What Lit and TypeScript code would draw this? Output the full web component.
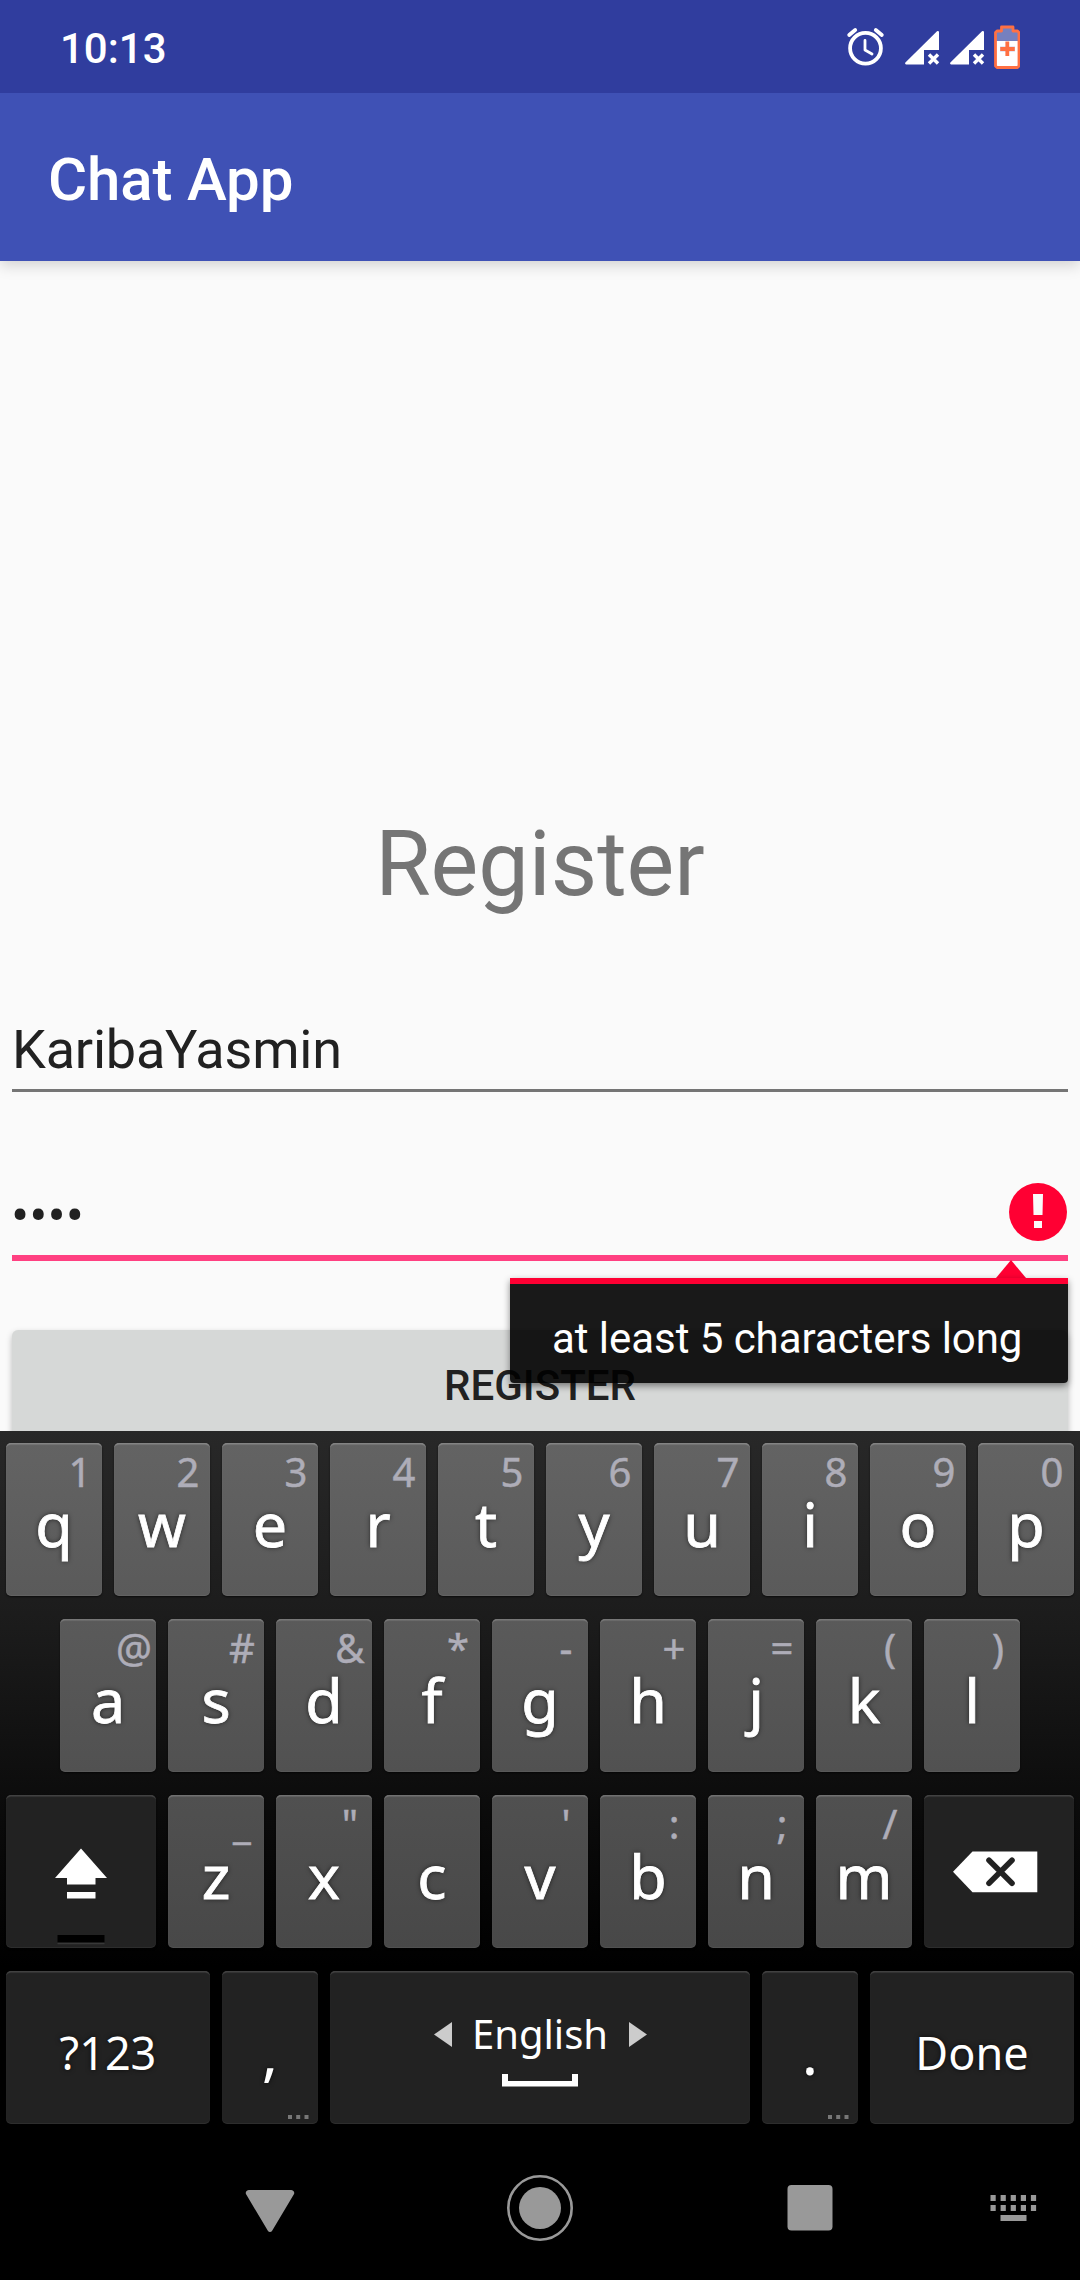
import { LitElement, html, css, svg, nothing } from "lit";
import { customElement, property } from "lit/decorators.js";

interface KeySpec {
  label: string;
  hint?: string;
}

const letters = (chars: string, hints: string): KeySpec[] =>
  [...chars].map((label, i) => ({ label, hint: hints[i] === " " ? undefined : hints[i] }));

const ROW_TOP = letters("qwertyuiop", "1234567890");
const ROW_HOME = letters("asdfghjkl", "@#&*-+=()");
const ROW_BOTTOM = letters("zxcvbnm", "_\" ':;/");

@customElement("status-bar")
class StatusBar extends LitElement {
  static styles = css`
    :host {
      display: flex;
      box-sizing: border-box;
      height: 93px;
      padding: 4px 60px 0 60px;
      align-items: center;
      justify-content: space-between;
      background: #303d9e;
      color: #fff;
    }
    .time {
      font: 500 42px/50px Roboto, sans-serif;
    }
    .icons {
      display: block;
      width: 174px;
      height: 50px;
    }
  `;

  render() {
    const signal = (x: number) => svg`
      <path d="M${x + 32} 7.2 a1.2 1.2 0 0 1 2 .8 V26 H${x + 19} V40.5 H${x + 1.2} a1.2 1.2 0 0 1 -.8 -2 Z" fill="#fff" />
      <path d="M${x + 24} 30.5 l9 9 m0 -9 l-9 9" stroke="#fff" stroke-width="3.4" />`;
    return html`
      <span class="time">10:13</span>
      <svg class="icons" viewBox="0 0 174 50" fill="none">
        <g stroke="#fff" stroke-width="3.8" stroke-linecap="round" stroke-linejoin="round">
          <circle cx="19.5" cy="24.3" r="15.4" />
          <path d="M19 16.5 V26 L26 30" stroke-width="2.8" />
          <path d="M3.2 11 L9.2 6" />
          <path d="M29.8 6 L35.8 11" />
        </g>
        ${signal(59)} ${signal(104)}
        <path d="M150 7.5 h6 v-4 h10.5 v4 h6 v9.5 h-22.5 z" fill="#7580bf" />
        <path d="M150 17 h22.5 v26 h-22.5 z" fill="#fff" />
        <path d="M151 7 h4.5 v-4 h11.5 v4 h4.5 l1.5 1.5 v33.5 l-1.5 1.5 h-20.5 l-1.5 -1.5 v-33.5 z"
          stroke="#ff7043" stroke-width="2.8" stroke-linejoin="round" />
        <path d="M154 25 h15" stroke="#c9cdea" stroke-width="5" />
        <path d="M161.3 17.5 v14.5 M154.3 25 h14.4" stroke="#ff7043" stroke-width="3.8" />
      </svg>
    `;
  }
}

@customElement("register-form")
class RegisterForm extends LitElement {
  static styles = css`
    :host {
      display: block;
      box-sizing: border-box;
      height: 1170px;
      padding: 551px 12px 0;
      overflow: hidden;
      background: #fafafa;
      color: #212121;
      font-family: Roboto, sans-serif;
    }
    .title {
      margin: 0;
      font-size: 90px;
      font-weight: 400;
      line-height: 106px;
      text-align: center;
      color: #757575;
    }
    .field {
      display: flex;
      justify-content: space-between;
      align-items: flex-start;
      font-size: 54px;
      line-height: 64px;
    }
    .name {
      margin-top: 100px;
      padding-bottom: 7px;
      border-bottom: 3px solid #757575;
      letter-spacing: -0.22px;
    }
    .password {
      position: relative;
      margin-top: 91px;
      height: 72px;
      border-bottom: 6px solid #ff4081;
    }
    .dots {
      margin: 1px 0 0 -1px;
    }
    .alert {
      display: block;
      width: 58px;
      height: 58px;
      margin-right: 1.5px;
    }
    .popup {
      position: absolute;
      top: 77px;
      right: 0;
      width: 558px;
      display: flex;
      flex-direction: column;
      z-index: 2;
    }
    .arrow {
      display: block;
      width: 30px;
      height: 18px;
      margin-left: 486px;
    }
    .bubble {
      box-sizing: border-box;
      height: 104.5px;
      padding: 30px 0 0 42px;
      border-top: 6px solid #ff0033;
      border-radius: 0 0 4px 4px;
      background: rgba(0, 0, 0, 0.9);
      background-clip: padding-box;
      box-shadow: 0 3px 7px rgba(0, 0, 0, 0.45);
      color: #fff;
      font-size: 42px;
      line-height: 50px;
      letter-spacing: -0.05px;
      white-space: nowrap;
    }
    .submit {
      display: block;
      box-sizing: border-box;
      width: 100%;
      height: 132px;
      margin: 69px 0 0;
      padding: 31px 0 0;
      border: 0;
      border-radius: 6px;
      background: #d6d8d7;
      box-shadow: 0 3px 6px rgba(0, 0, 0, 0.25);
      color: #212121;
      font: 500 42px/50px Roboto, sans-serif;
      text-align: center;
    }
  `;

  render() {
    return html`
      <h1 class="title">Register</h1>
      <div class="field name">KaribaYasmin</div>
      <div class="field password">
        <span class="dots">••••</span>
        <svg class="alert" viewBox="0 0 58 58">
          <circle cx="29" cy="29" r="29" fill="#ff0033" />
          <path d="M24 11 h10 l-.5 21 h-9 z M25 38 h8 v7 h-8 z" fill="#fafafa" />
        </svg>
        <div class="popup">
          <svg class="arrow" viewBox="0 0 30 18"><path d="M15 0 L30 18 H0 Z" fill="#ff0033" /></svg>
          <div class="bubble">at least 5 characters long</div>
        </div>
      </div>
      <div class="submit">REGISTER</div>
    `;
  }
}

@customElement("key-cap")
class KeyCap extends LitElement {
  @property() label = "";
  @property() hint = "";
  @property({ type: Boolean }) more = false;

  static styles = css`
    :host {
      display: flex;
      position: relative;
      box-sizing: border-box;
      width: 96px;
      height: 153px;
      flex: none;
      justify-content: center;
      align-items: flex-start;
      padding-top: 41px;
      border-radius: 5px;
      background: var(--face, #222);
      box-shadow: inset 0 2px 1px -0.5px var(--shine, #444), inset 0 -1px 1px rgba(255, 255, 255, 0.06),
        0 1px 2px rgba(0, 0, 0, 0.6);
      color: #fff;
      font: 61px/80px "Noto Sans", "Open Sans", sans-serif;
    }
    .label {
      text-shadow: 0 0 5px rgba(0, 0, 0, 0.7);
      -webkit-text-stroke: var(--weight, 0) #fff;
    }
    .hint {
      position: absolute;
      top: 7px;
      right: 0;
      width: 44px;
      display: flex;
      justify-content: center;
      color: #aeadb8;
      -webkit-text-stroke: 0.5px #aeadb8;
      font-size: 40px;
      line-height: 44px;
    }
    .more {
      position: absolute;
      right: 9px;
      bottom: 5px;
      width: 21px;
      height: 4px;
    }
  `;

  render() {
    return html`
      <slot><span class="label">${this.label}</span></slot>
      ${this.hint ? html`<span class="hint">${this.hint}</span>` : nothing}
      ${this.more
        ? html`<svg class="more" viewBox="0 0 21 4"><path d="M0 0h4v4H0zM8.2 0h4v4h-4zM16.5 0h4v4h-4z" fill="#777" /></svg>`
        : nothing}
    `;
  }
}

@customElement("soft-keyboard")
class SoftKeyboard extends LitElement {
  static styles = css`
    :host {
      display: flex;
      flex-direction: column;
      box-sizing: border-box;
      height: 705px;
      padding-top: 12px;
      gap: 23px;
      background: linear-gradient(#282828 0, #1b1b1b 28%, #0b0b0b 54%, #000 76%);
    }
    .row {
      display: flex;
      justify-content: center;
      gap: 12px;
    }
    .letter {
      --weight: 0.8px;
    }
    .r1 .letter {
      --face: linear-gradient(#636363, #5a5a5a);
      --shine: #858585;
    }
    .r2 .letter {
      --face: linear-gradient(#5a5a5a, #515151);
      --shine: #7a7a7a;
    }
    .r3 .letter {
      --face: linear-gradient(#505050, #484848);
      --shine: #727272;
    }
    .side {
      width: 150px;
    }
    .edge {
      width: 204px;
      padding-top: 42px;
      font-size: 45px;
    }
    .space {
      width: 420px;
      padding-top: 36px;
      font-size: 40px;
      line-height: 54px;
      flex-direction: column;
      align-items: center;
      justify-content: flex-start;
      gap: 13px;
    }
    .language {
      display: flex;
      align-items: center;
      justify-content: space-between;
      width: 213px;
    }
    .tri {
      display: block;
      width: 18px;
      height: 25px;
    }
    .bar {
      display: block;
      width: 76px;
      height: 13px;
    }
    .glyph {
      display: block;
      width: 150px;
      height: 153px;
      margin-top: -41px;
      flex: none;
    }
  `;

  private row(keys: KeySpec[]) {
    return keys.map((k) => html`<key-cap class="letter" .label=${k.label} .hint=${k.hint ?? ""}></key-cap>`);
  }

  render() {
    return html`
      <div class="row r1">${this.row(ROW_TOP)}</div>
      <div class="row r2">${this.row(ROW_HOME)}</div>
      <div class="row r3">
        <key-cap class="side">
          <svg class="glyph" viewBox="0 0 150 153">
            <path d="M75 53.5 L101 83 H89.5 V89.5 H61 V83 H49 Z M61 97 h28.5 v6.5 h-28.5 z" fill="#fff" />
            <path d="M51.5 140 h47 v7.5 h-47 z" fill="#000" />
            <path d="M51.5 148.5 h47" stroke="#383838" stroke-width="1.5" />
          </svg>
        </key-cap>
        ${this.row(ROW_BOTTOM)}
        <key-cap class="side">
          <svg class="glyph" viewBox="0 0 150 153">
            <path d="M29 76.7 L48.5 56.5 H113.3 V97.3 H48.5 Z" fill="#fff" />
            <path d="M65 65.2 l23 23 m0 -23 l-23 23" stroke="#222" stroke-width="5.6" stroke-linecap="round" />
          </svg>
        </key-cap>
      </div>
      <div class="row r4">
        <key-cap class="edge" label="?123"></key-cap>
        <key-cap label="," more></key-cap>
        <key-cap class="space">
          <span class="language">
            <svg class="tri" viewBox="0 0 18 25"><path d="M0 12.5 L18 0 V25 Z" fill="#ccc" /></svg>
            <span>English</span>
            <svg class="tri" viewBox="0 0 18 25"><path d="M18 12.5 L0 0 V25 Z" fill="#ccc" /></svg>
          </span>
          <svg class="bar" viewBox="0 0 76 13">
            <path d="M0 0 h6 v7 h64 v-7 h6 v12.5 h-76 z" fill="#fff" />
          </svg>
        </key-cap>
        <key-cap label="." more></key-cap>
        <key-cap class="edge" label="Done"></key-cap>
      </div>
    `;
  }
}

@customElement("nav-bar")
class NavBar extends LitElement {
  static styles = css`
    :host {
      display: grid;
      grid-template-columns: 135px repeat(3, 270px) 135px;
      align-items: center;
      justify-items: center;
      height: 144px;
      background: #000;
    }
    .icon {
      display: block;
      width: 68px;
      height: 68px;
    }
    .back {
      grid-column: 2;
    }
  `;

  render() {
    return html`
      <svg class="icon back" viewBox="0 0 68 68">
        <path d="M13 16 H55 a3 3 0 0 1 2.6 4.8 L36 57 a2.4 2.4 0 0 1 -4 0 L10.4 20.8 A3 3 0 0 1 13 16 Z" fill="#999" />
      </svg>
      <svg class="icon" viewBox="0 0 68 68">
        <circle cx="34" cy="34" r="31.7" fill="none" stroke="#999" stroke-width="2.6" />
        <circle cx="34" cy="34" r="21" fill="#999" />
      </svg>
      <svg class="icon" viewBox="0 0 68 68">
        <rect x="11.5" y="11" width="45" height="45.5" rx="4" fill="#999" />
      </svg>
      <svg class="icon" viewBox="0 0 68 68">
        ${[21, 31].map((y) =>
          [0, 1, 2, 3, 4].map((i) => svg`<rect x=${11.5 + i * 10.1} y=${y} width="5.2" height="6" fill="#999" />`)
        )}
        <rect x="21.5" y="41" width="26" height="6" fill="#999" />
      </svg>
    `;
  }
}

@customElement("app-root")
class AppRoot extends LitElement {
  static styles = css`
    :host {
      display: flex;
      flex-direction: column;
      width: 1080px;
      height: 2280px;
      overflow: hidden;
      background: #fafafa;
    }
    .appbar {
      position: relative;
      z-index: 1;
      box-sizing: border-box;
      height: 168px;
      flex: none;
      padding: 5px 48px 0;
      display: flex;
      align-items: center;
      background: #3f51b5;
      box-shadow: 0 4px 14px rgba(0, 0, 0, 0.17);
      clip-path: inset(0 0 -30px 0);
      color: #fff;
      font: 500 60px/70px Roboto, sans-serif;
      letter-spacing: -0.15px;
    }
    .fixed {
      flex: none;
    }
  `;

  render() {
    return html`
      <status-bar class="fixed"></status-bar>
      <header class="appbar">Chat App</header>
      <register-form class="fixed"></register-form>
      <soft-keyboard class="fixed"></soft-keyboard>
      <nav-bar class="fixed"></nav-bar>
    `;
  }
}
